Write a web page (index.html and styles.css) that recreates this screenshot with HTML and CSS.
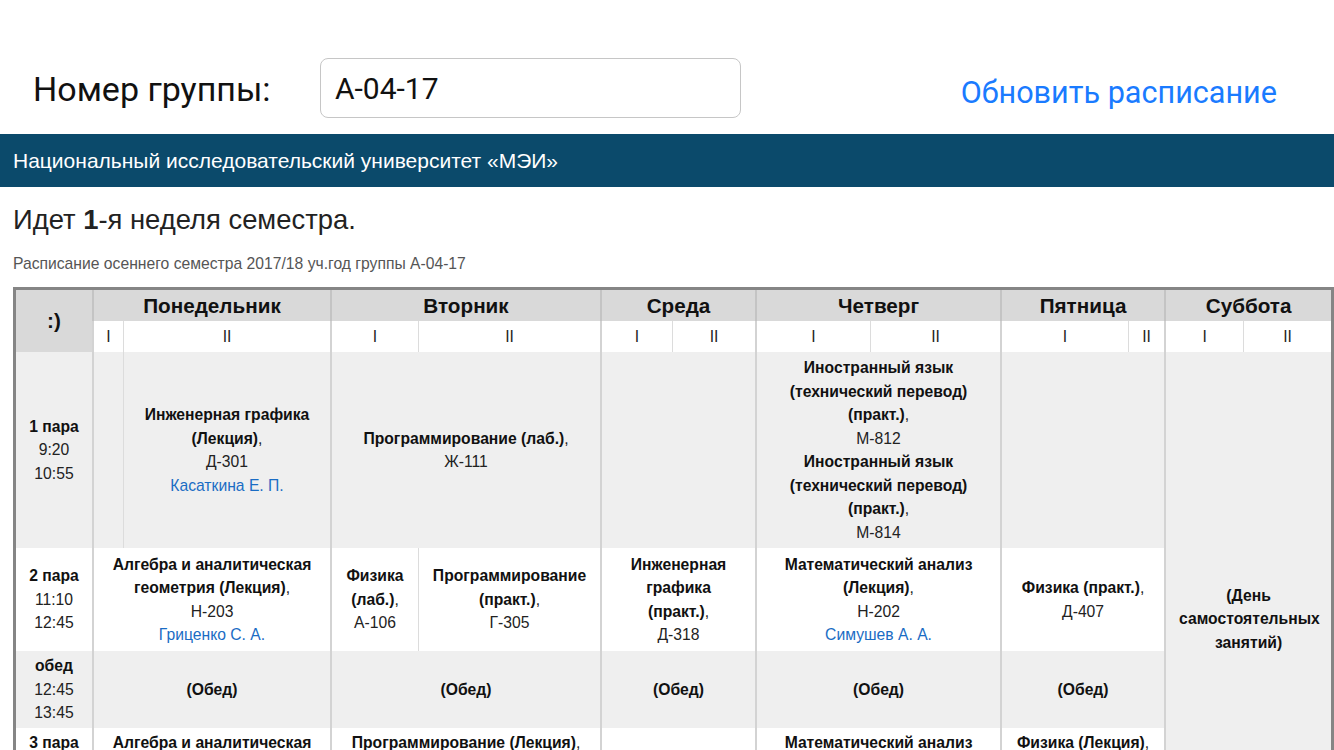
FILE: index.html
```html
<!DOCTYPE html>
<html lang="ru">
<head>
<meta charset="utf-8">
<title>Расписание</title>
<link rel="stylesheet" href="styles.css">
</head>
<body>
<div class="topbar">
  <label class="group-label" for="grp">Номер группы:</label>
  <input class="group-input" id="grp" type="text" value="А-04-17">
  <a class="refresh" href="#">Обновить расписание</a>
</div>
<div class="brand">Национальный исследовательский университет «МЭИ»</div>
<main class="content">
  <h1 class="week">Идет <b>1</b>-я неделя семестра.</h1>
  <p class="caption">Расписание осеннего семестра 2017/18 уч.год группы А-04-17</p>
  <table class="sched">
    <colgroup>
      <col class="c-time">
      <col class="c-mon1"><col class="c-mon2">
      <col class="c-tue1"><col class="c-tue2">
      <col class="c-wed1"><col class="c-wed2">
      <col class="c-thu1"><col class="c-thu2">
      <col class="c-fri1"><col class="c-fri2">
      <col class="c-sat1"><col class="c-sat2">
    </colgroup>
    <tr class="days">
      <th class="smile" rowspan="2">:)</th>
      <th class="day" colspan="2">Понедельник</th>
      <th class="day" colspan="2">Вторник</th>
      <th class="day" colspan="2">Среда</th>
      <th class="day" colspan="2">Четверг</th>
      <th class="day" colspan="2">Пятница</th>
      <th class="day" colspan="2">Суббота</th>
    </tr>
    <tr class="weeks">
      <td class="d">I</td><td class="s">II</td>
      <td class="d">I</td><td class="s">II</td>
      <td class="d">I</td><td class="s">II</td>
      <td class="d">I</td><td class="s">II</td>
      <td class="d">I</td><td class="s">II</td>
      <td class="d">I</td><td class="s">II</td>
    </tr>
    <tr class="grey r1">
      <td class="time"><b>1 пара</b><br>9:20<br>10:55</td>
      <td class="d"></td>
      <td class="s"><b>Инженерная графика (Лекция)</b>,<br>Д-301<br><a href="#">Касаткина Е. П.</a></td>
      <td class="d" colspan="2"><b>Программирование (лаб.)</b>,<br>Ж-111</td>
      <td class="d" colspan="2"></td>
      <td class="d" colspan="2"><b>Иностранный язык (технический перевод) (практ.)</b>,<br>М-812<br><b>Иностранный язык (технический перевод) (практ.)</b>,<br>М-814</td>
      <td class="d" colspan="2"></td>
      <td class="d sat" colspan="2" rowspan="4"><b>(День самостоятельных занятий)</b></td>
    </tr>
    <tr class="white r2">
      <td class="time"><b>2 пара</b><br>11:10<br>12:45</td>
      <td class="d" colspan="2"><b>Алгебра и аналитическая геометрия (Лекция)</b>,<br>Н-203<br><a href="#">Гриценко С. А.</a></td>
      <td class="d"><b>Физика (лаб.)</b>,<br>А-106</td>
      <td class="s"><b>Программирование (практ.)</b>,<br>Г-305</td>
      <td class="d" colspan="2"><b>Инженерная графика (практ.)</b>,<br>Д-318</td>
      <td class="d" colspan="2"><b>Математический анализ (Лекция)</b>,<br>Н-202<br><a href="#">Симушев А. А.</a></td>
      <td class="d" colspan="2"><b>Физика (практ.)</b>,<br>Д-407</td>
    </tr>
    <tr class="grey r3">
      <td class="time"><b>обед</b><br>12:45<br>13:45</td>
      <td class="d" colspan="2"><b>(Обед)</b></td>
      <td class="d" colspan="2"><b>(Обед)</b></td>
      <td class="d" colspan="2"><b>(Обед)</b></td>
      <td class="d" colspan="2"><b>(Обед)</b></td>
      <td class="d" colspan="2"><b>(Обед)</b></td>
    </tr>
    <tr class="white r4">
      <td class="time top"><b>3 пара</b><br>13:45<br>15:20</td>
      <td class="d top" colspan="2"><b>Алгебра и аналитическая геометрия (Лекция)</b>,<br>Н-203<br><a href="#">Гриценко С. А.</a></td>
      <td class="d top" colspan="2"><b>Программирование (Лекция)</b>,<br>Ж-120<br><a href="#">Орлов А. В.</a></td>
      <td class="d top" colspan="2"></td>
      <td class="d top" colspan="2"><b>Математический анализ (практ.)</b>,<br>Н-202<br><a href="#">Симушев А. А.</a></td>
      <td class="d top" colspan="2"><b>Физика (Лекция)</b>,<br>Б-114<br><a href="#">Иванов П. С.</a></td>
    </tr>
  </table>
</main>
</body>
</html>
```
FILE: styles.css
```css
html, body {
  margin: 0;
  padding: 0;
  background: #ffffff;
}

body {
  font-family: "Liberation Sans", Arial, sans-serif;
  color: #111111;
  overflow: hidden;
}

.topbar {
  height: 134px;
  display: flex;
  align-items: flex-start;
  padding: 0 57px 0 33px;
  box-sizing: border-box;
  font-family: Roboto, "Liberation Sans", sans-serif;
}

.group-label {
  width: 287px;
  flex: none;
  font-size: 34px;
  line-height: 40px;
  color: #111111;
  margin-top: 69px;
}

.group-input {
  flex: none;
  width: 421px;
  height: 60px;
  box-sizing: border-box;
  border: 1px solid #c6c6c6;
  border-radius: 8px;
  padding: 0 14px;
  font-family: Roboto, "Liberation Sans", sans-serif;
  font-size: 30px;
  color: #111111;
  margin-top: 58px;
  outline: none;
}

.refresh {
  margin-left: auto;
  font-size: 30.6px;
  line-height: 36px;
  color: #1a7bff;
  text-decoration: none;
  margin-top: 75px;
}

.brand {
  height: 53px;
  background: #0b4a6b;
  color: #ffffff;
  font-size: 21px;
  line-height: 53px;
  padding-left: 13px;
}

.content {
  padding: 0 0 0 13px;
}

.week {
  margin: 17px 0 0;
  font-size: 27.4px;
  font-weight: normal;
  line-height: 32px;
  color: #222222;
}

.week b {
  font-weight: bold;
}

.caption {
  margin: 18px 0 0;
  font-size: 15.7px;
  line-height: 19px;
  color: #555555;
}

.sched {
  margin-top: 14px;
  width: 1321px;
  table-layout: fixed;
  border-collapse: separate;
  border-spacing: 0;
  border: 3px solid #858585;
  border-bottom: none;
  font-size: 15.7px;
  line-height: 23.5px;
}

.c-time { width: 76px; }
.c-mon1 { width: 31px; }
.c-mon2 { width: 207px; }
.c-tue1 { width: 88px; }
.c-tue2 { width: 182px; }
.c-wed1 { width: 72px; }
.c-wed2 { width: 83px; }
.c-thu1 { width: 115px; }
.c-thu2 { width: 130px; }
.c-fri1 { width: 128px; }
.c-fri2 { width: 36px; }
.c-sat1 { width: 79px; }
.c-sat2 { width: 88px; }

.sched th,
.sched td {
  padding: 0 13px;
  text-align: center;
  vertical-align: middle;
  box-sizing: border-box;
  overflow: hidden;
}

.sched td.time { padding: 0 2px; }

.sched td.d { border-left: 2px solid #d3d3d3; }
.sched td.s { border-left: 1px solid #dcdcdc; }

.days th {
  height: 31px;
  padding: 0;
  background: #d9d9d9;
  font-size: 20.7px;
  font-weight: bold;
  color: #111111;
}

.days th.day { border-left: 2px solid #c4c4c4; }

.smile {
  font-size: 20.7px;
}

.sched .weeks td {
  height: 31px;
  padding: 0;
  background: #ffffff;
  font-size: 15.7px;
  color: #222222;
}

.grey td { background: #efefef; }
.white td { background: #ffffff; }
.sched td.sat { background: #efefef; }

.r1 td { height: 196px; }
.r2 td { height: 103px; }
.r3 td { height: 77px; }
.r4 td { height: 158px; }

.sched td.top { vertical-align: top; padding-top: 3px; }

.sched td { color: #222222; }

.sched td b { color: #111111; }

.sched td a {
  color: #1a6cc4;
  text-decoration: none;
}
```
